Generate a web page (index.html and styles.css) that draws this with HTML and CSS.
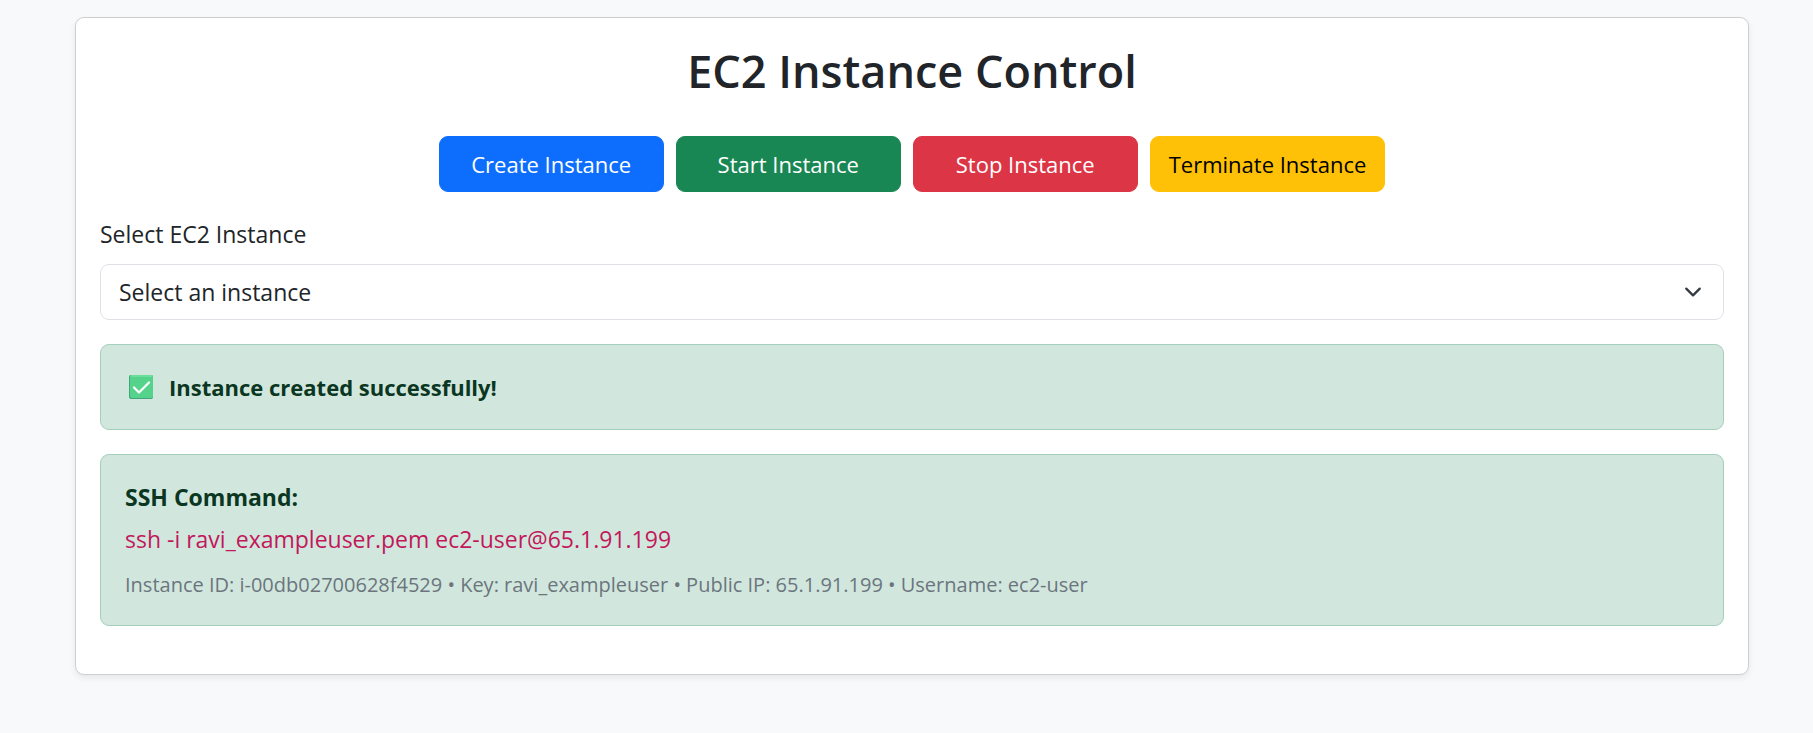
FILE: index.html
```
<!DOCTYPE html>
<html lang="en">
<head>
<meta charset="utf-8">
<meta name="viewport" content="width=device-width, initial-scale=1">
<title>EC2 Instance Control</title>
<link rel="stylesheet" href="styles.css">
</head>
<body>
<main class="card">
  <h1 class="title">EC2 Instance Control</h1>
  <div class="actions">
    <button type="button" class="btn btn-primary">Create Instance</button>
    <button type="button" class="btn btn-success">Start Instance</button>
    <button type="button" class="btn btn-danger">Stop Instance</button>
    <button type="button" class="btn btn-warning">Terminate Instance</button>
  </div>
  <label class="field-label" for="instance">Select EC2 Instance</label>
  <div class="select-wrap">
    <select class="select" id="instance">
      <option>Select an instance</option>
    </select>
    <svg class="chevron" viewBox="0 0 16 16" aria-hidden="true"><path d="m2 5 6 6 6-6" fill="none" stroke="#343a40" stroke-width="2" stroke-linecap="round" stroke-linejoin="round"/></svg>
  </div>
  <div class="alert status" role="status">
    <svg class="check" viewBox="0 0 24 24" aria-hidden="true">
      <rect width="24" height="24" rx="2" fill="#3da779"/>
      <rect x="1" y="0" width="23" height="23" rx="2" fill="#55d38b"/>
      <path d="M2 1h21" stroke="#68df9b" stroke-width="2"/>
      <path d="m5 12.500 5 5L20 7.500" fill="none" stroke="#fff" stroke-width="2.200" stroke-linecap="round" stroke-linejoin="round"/>
    </svg>
    <strong>Instance created successfully!</strong>
  </div>
  <div class="alert details">
    <strong>SSH Command:</strong>
    <code class="command">ssh -i ravi_exampleuser.pem ec2-user@65.1.91.199</code>
    <p class="meta">Instance ID: i-00db02700628f4529 • Key: ravi_exampleuser • Public IP: 65.1.91.199 • Username: ec2-user</p>
  </div>
</main>
</body>
</html>
```
FILE: styles.css
```
* {
  box-sizing: border-box;
}

body {
  margin: 0;
  padding: 17px 64px 58px 75px;
  background: #f8f9fa;
  color: #212529;
  font-family: "Segoe UI", "Open Sans", "Noto Sans", sans-serif;
  font-size: 23px;
  line-height: 36px;
}

.card {
  padding: 24px 24px 48px;
  background: #fff;
  border: 1px solid #cdcfd1;
  border-radius: 9px;
  box-shadow: 0 3px 6px rgba(0, 0, 0, 0.075);
}

.title {
  margin: 0 0 36px;
  font-size: 45px;
  font-weight: 600;
  line-height: 58px;
  text-align: center;
}

.actions {
  display: flex;
  flex-wrap: wrap;
  justify-content: center;
  gap: 12px;
  margin-bottom: 24px;
}

.btn {
  min-width: 225px;
  padding: 9px 18px;
  border: 1px solid transparent;
  border-radius: 9px;
  color: #fff;
  font: inherit;
  font-size: 22px;
  cursor: pointer;
}

.btn-primary {
  background: #0d6efd;
  border-color: #0d6efd;
}

.btn-success {
  background: #198754;
  border-color: #198754;
}

.btn-danger {
  background: #dc3545;
  border-color: #dc3545;
}

.btn-warning {
  background: #ffc107;
  border-color: #ffc107;
  color: #000;
}

.field-label {
  display: block;
  margin-bottom: 12px;
}

.select-wrap {
  display: grid;
  align-items: center;
  margin-bottom: 24px;
}

.select {
  grid-area: 1 / 1;
  width: 100%;
  padding: 9px 54px 9px 18px;
  border: 1px solid #dee2e6;
  border-radius: 9px;
  background: #fff;
  color: #212529;
  font: inherit;
  appearance: none;
}

.chevron {
  grid-area: 1 / 1;
  justify-self: end;
  width: 18px;
  height: 18px;
  margin-right: 22px;
  pointer-events: none;
}

.alert {
  padding: 24px;
  background: #d1e7dd;
  border: 1px solid #a3cfbb;
  border-radius: 9px;
  color: #0a3622;
}

.status {
  display: flex;
  align-items: center;
  gap: 16px;
  margin-bottom: 24px;
  padding-left: 28px;
  font-size: 22px;
}

.check {
  width: 24px;
  height: 24px;
}

.details strong {
  display: block;
}

.command {
  display: block;
  margin: 6px 0 12px;
  color: #c2185b;
  font-family: inherit;
  font-size: inherit;
  overflow-wrap: anywhere;
}

.meta {
  margin: 0;
  color: #6c757d;
  font-size: 20px;
  line-height: 32px;
}
```
